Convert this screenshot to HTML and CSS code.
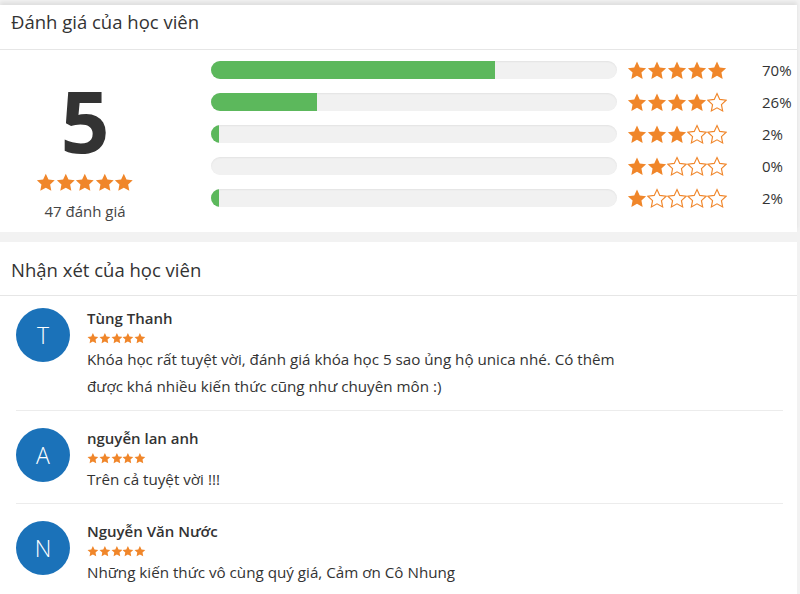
FILE: index.html
```html
<!DOCTYPE html>
<html lang="vi">
<head>
<meta charset="utf-8">
<link rel="stylesheet" href="styles.css">
<title>Đánh giá</title>
</head>
<body>
<svg width="0" height="0" class="defs">
  <defs>
    <path id="star" d="M12 1.3L15.29 8.27L22.94 9.25L17.33 14.53L18.76 22.1L12 18.4L5.24 22.1L6.67 14.53L1.06 9.25L8.71 8.27Z"/>
  </defs>
</svg>

<section class="panel rating-panel">
  <h2 class="panel-head head-1">Đánh giá của học viên</h2>
  <div class="rating-body">
    <div class="score">
      <div class="score-num">5</div>
      <div class="stars big">
        <svg class="s on" viewBox="0 0 24 24"><use href="#star"/></svg><svg class="s on" viewBox="0 0 24 24"><use href="#star"/></svg><svg class="s on" viewBox="0 0 24 24"><use href="#star"/></svg><svg class="s on" viewBox="0 0 24 24"><use href="#star"/></svg><svg class="s on" viewBox="0 0 24 24"><use href="#star"/></svg>
      </div>
      <div class="score-count">47 đánh giá</div>
    </div>
    <div class="bars">
      <div class="bar-row">
        <div class="track"><div class="fill" style="width:70%"></div></div>
        <div class="stars mid"><svg class="s on" viewBox="0 0 24 24"><use href="#star"/></svg><svg class="s on" viewBox="0 0 24 24"><use href="#star"/></svg><svg class="s on" viewBox="0 0 24 24"><use href="#star"/></svg><svg class="s on" viewBox="0 0 24 24"><use href="#star"/></svg><svg class="s on" viewBox="0 0 24 24"><use href="#star"/></svg></div>
        <div class="pct">70%</div>
      </div>
      <div class="bar-row">
        <div class="track"><div class="fill" style="width:26%"></div></div>
        <div class="stars mid"><svg class="s on" viewBox="0 0 24 24"><use href="#star"/></svg><svg class="s on" viewBox="0 0 24 24"><use href="#star"/></svg><svg class="s on" viewBox="0 0 24 24"><use href="#star"/></svg><svg class="s on" viewBox="0 0 24 24"><use href="#star"/></svg><svg class="s off" viewBox="0 0 24 24"><use href="#star"/></svg></div>
        <div class="pct">26%</div>
      </div>
      <div class="bar-row">
        <div class="track"><div class="fill" style="width:2%"></div></div>
        <div class="stars mid"><svg class="s on" viewBox="0 0 24 24"><use href="#star"/></svg><svg class="s on" viewBox="0 0 24 24"><use href="#star"/></svg><svg class="s on" viewBox="0 0 24 24"><use href="#star"/></svg><svg class="s off" viewBox="0 0 24 24"><use href="#star"/></svg><svg class="s off" viewBox="0 0 24 24"><use href="#star"/></svg></div>
        <div class="pct">2%</div>
      </div>
      <div class="bar-row">
        <div class="track"><div class="fill" style="width:0%"></div></div>
        <div class="stars mid"><svg class="s on" viewBox="0 0 24 24"><use href="#star"/></svg><svg class="s on" viewBox="0 0 24 24"><use href="#star"/></svg><svg class="s off" viewBox="0 0 24 24"><use href="#star"/></svg><svg class="s off" viewBox="0 0 24 24"><use href="#star"/></svg><svg class="s off" viewBox="0 0 24 24"><use href="#star"/></svg></div>
        <div class="pct">0%</div>
      </div>
      <div class="bar-row">
        <div class="track"><div class="fill" style="width:2%"></div></div>
        <div class="stars mid"><svg class="s on" viewBox="0 0 24 24"><use href="#star"/></svg><svg class="s off" viewBox="0 0 24 24"><use href="#star"/></svg><svg class="s off" viewBox="0 0 24 24"><use href="#star"/></svg><svg class="s off" viewBox="0 0 24 24"><use href="#star"/></svg><svg class="s off" viewBox="0 0 24 24"><use href="#star"/></svg></div>
        <div class="pct">2%</div>
      </div>
    </div>
  </div>
</section>

<section class="panel review-panel">
  <h2 class="panel-head head-2">Nhận xét của học viên</h2>
  <div class="reviews">
    <div class="review first">
      <div class="avatar">T</div>
      <div class="review-main">
        <div class="name">Tùng Thanh</div>
        <div class="stars small"><svg class="s on" viewBox="0 0 24 24"><use href="#star"/></svg><svg class="s on" viewBox="0 0 24 24"><use href="#star"/></svg><svg class="s on" viewBox="0 0 24 24"><use href="#star"/></svg><svg class="s on" viewBox="0 0 24 24"><use href="#star"/></svg><svg class="s on" viewBox="0 0 24 24"><use href="#star"/></svg></div>
        <p class="text">Khóa học rất tuyệt vời, đánh giá khóa học 5 sao ủng hộ unica nhé. Có thêm<br>được khá nhiều kiến thức cũng như chuyên môn :)</p>
      </div>
    </div>
    <div class="review">
      <div class="avatar">A</div>
      <div class="review-main">
        <div class="name">nguyễn lan anh</div>
        <div class="stars small"><svg class="s on" viewBox="0 0 24 24"><use href="#star"/></svg><svg class="s on" viewBox="0 0 24 24"><use href="#star"/></svg><svg class="s on" viewBox="0 0 24 24"><use href="#star"/></svg><svg class="s on" viewBox="0 0 24 24"><use href="#star"/></svg><svg class="s on" viewBox="0 0 24 24"><use href="#star"/></svg></div>
        <p class="text">Trên cả tuyệt vời !!!</p>
      </div>
    </div>
    <div class="review">
      <div class="avatar">N</div>
      <div class="review-main">
        <div class="name">Nguyễn Văn Nước</div>
        <div class="stars small"><svg class="s on" viewBox="0 0 24 24"><use href="#star"/></svg><svg class="s on" viewBox="0 0 24 24"><use href="#star"/></svg><svg class="s on" viewBox="0 0 24 24"><use href="#star"/></svg><svg class="s on" viewBox="0 0 24 24"><use href="#star"/></svg><svg class="s on" viewBox="0 0 24 24"><use href="#star"/></svg></div>
        <p class="text">Những kiến thức vô cùng quý giá, Cảm ơn Cô Nhung</p>
      </div>
    </div>
  </div>
</section>
</body>
</html>
```

FILE: styles.css
```css
* { box-sizing: border-box; }

html, body {
  margin: 0;
  height: 100%;
}

body {
  background: #f2f2f2;
  font-family: "Open Sans", "Noto Sans", sans-serif;
  color: #333;
  padding-top: 5px;
  overflow: hidden;
}

.defs {
  position: absolute;
  width: 0;
  height: 0;
}

.panel {
  background: #fff;
  margin-right: 3px;
}

.rating-panel {
  box-shadow: 0 -3px 4px rgba(0, 0, 0, 0.08);
}

.panel-head {
  margin: 0;
  font-size: 18.5px;
  font-weight: 400;
  color: #333;
  padding: 0 11px;
  border-bottom: 1px solid #e6e6e6;
  line-height: 24px;
}

.head-1 {
  padding-top: 5px;
  padding-bottom: 15px;
}

.head-2 {
  padding-top: 16px;
  padding-bottom: 13px;
}

.review-panel {
  margin-top: 10px;
}

/* rating summary */
.rating-body {
  display: flex;
  align-items: flex-start;
  padding: 4px 0 11px;
}

.score {
  width: 170px;
  display: flex;
  flex-direction: column;
  align-items: center;
}

.score-num {
  font-size: 86px;
  font-weight: 700;
  line-height: 80px;
  color: #333;
  margin-top: 26px;
}

.stars {
  display: flex;
}

.s {
  display: block;
  flex: none;
}

.s.on use {
  fill: #f0862a;
}

.s.off use {
  fill: none;
  stroke: #f0862a;
  stroke-width: 1.4;
}

.stars.big {
  margin-top: 12px;
}

.stars.big .s {
  width: 19.6px;
  height: 21px;
}

.score-count {
  font-size: 15px;
  line-height: 20px;
  margin-top: 8px;
  color: #444;
}

.bars {
  margin-left: 41px;
  display: flex;
  flex-direction: column;
}

.bar-row {
  display: flex;
  align-items: center;
  height: 32px;
}

.track {
  width: 406px;
  height: 18px;
  border-radius: 9px;
  background: #f1f1f1;
  box-shadow: inset 0 1px 2px rgba(0, 0, 0, 0.06);
  overflow: hidden;
}

.fill {
  height: 100%;
  background: #5cb85c;
}

.stars.mid {
  margin-left: 10px;
}

.stars.mid .s {
  width: 20px;
  height: 21px;
}

.pct {
  margin-left: 35px;
  font-size: 15px;
  color: #333;
}

/* reviews */
.reviews {
  padding: 0 14px 0 16px;
}

.review {
  display: flex;
  padding: 17px 0 10px;
  border-top: 1px solid #ececec;
}

.review.first {
  border-top: none;
  padding-top: 12px;
}

.avatar {
  width: 54px;
  height: 54px;
  border-radius: 50%;
  background: #1b72b9;
  color: #fff;
  font-size: 23px;
  font-weight: 300;
  display: flex;
  align-items: center;
  justify-content: center;
  flex: none;
}

.review-main {
  margin-left: 17px;
}

.name {
  font-size: 15px;
  font-weight: 600;
  line-height: 20px;
  color: #333;
}

.stars.small {
  margin: 4px 0 2px;
  height: 12px;
}

.stars.small .s {
  width: 11.8px;
  height: 12.5px;
}

.text {
  margin: 0;
  font-size: 15.2px;
  line-height: 27px;
  color: #333;
}
```
